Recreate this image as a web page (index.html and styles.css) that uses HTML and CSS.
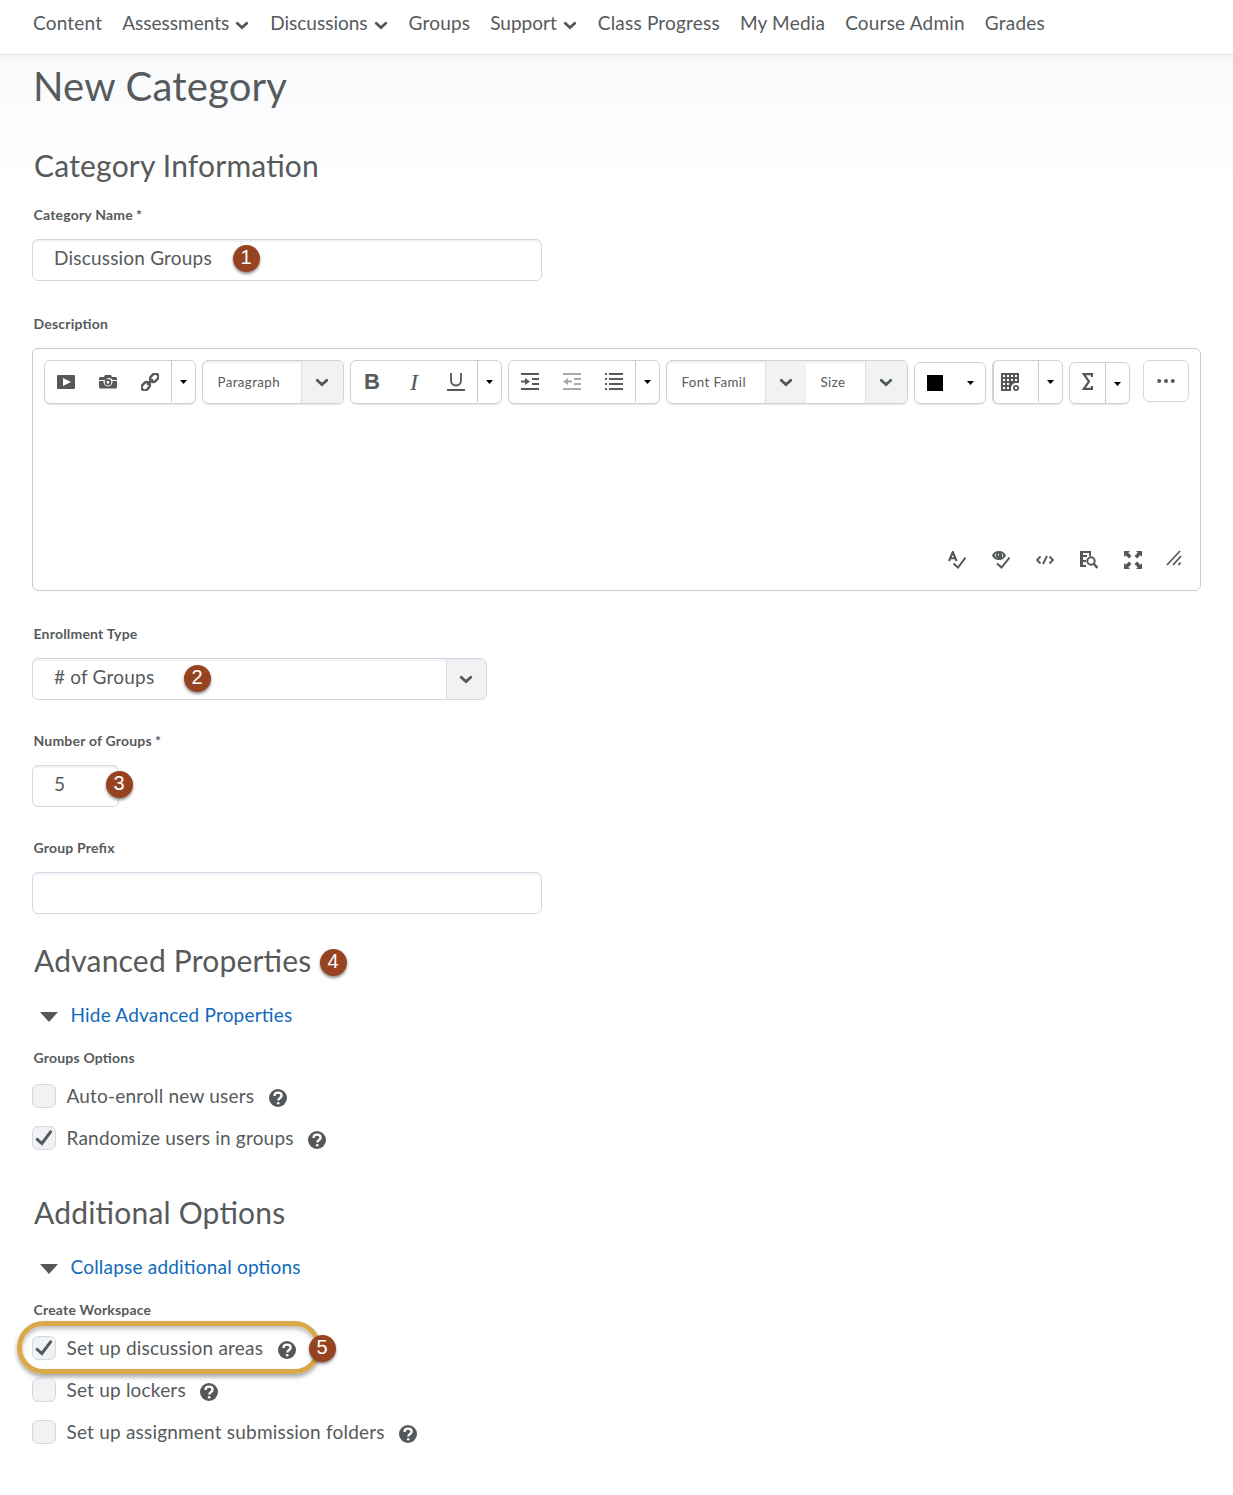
FILE: index.html
```html
<!DOCTYPE html>
<html lang="en">
<head>
    <meta charset="UTF-8">
    <meta name="viewport" content="width=device-width, initial-scale=1.0">
    <title>New Category</title>
    <link rel="stylesheet" href="styles.css">
</head>
<body>
    <!-- Shared icons -->
    <svg class="sprite" width="0" height="0">
        <symbol id="chevron" viewBox="0 0 14 9"><path d="M2.200 2.200L7 6.500l4.800-4.300" fill="none" stroke="#54585a" stroke-width="2.800" stroke-linecap="round"/></symbol>
        <symbol id="caret" viewBox="0 0 7 4"><path d="M0 0h7L3.500 4z"/></symbol>
        <symbol id="help" viewBox="0 0 18 18"><circle cx="9" cy="9" r="9" fill="#54585a"/><path d="M5.500 7C5.500 4.700 7 3.700 9 3.700s3.600 1.200 3.600 3c0 2.400-3.300 2.200-3.300 4.800" fill="none" stroke="#fff" stroke-width="2.300"/><circle cx="9.200" cy="14.300" r="1.300" fill="#fff"/></symbol>
        <symbol id="check" viewBox="0 0 18 18"><path d="M2.200 10.300l4.700 4.200L15.600 2.800" fill="none" stroke="#54585a" stroke-width="3" stroke-linecap="round"/></symbol>
    </svg>

    <nav class="navbar">
        <a>Content</a>
        <a class="has-menu">Assessments <svg class="chevron"><use href="#chevron"/></svg></a>
        <a class="has-menu">Discussions <svg class="chevron"><use href="#chevron"/></svg></a>
        <a>Groups</a>
        <a class="has-menu">Support <svg class="chevron"><use href="#chevron"/></svg></a>
        <a>Class Progress</a>
        <a>My Media</a>
        <a>Course Admin</a>
        <a>Grades</a>
    </nav>

    <main class="page">
        <h1>New Category</h1>
        <h2>Category Information</h2>

        <div class="field field-name">
            <label>Category Name<span class="required">*</span></label>
            <div class="input">Discussion Groups<span class="badge badge-1">1</span></div>
        </div>

        <div class="field">
            <label>Description</label>
            <div class="editor">
                <div class="toolbar">
                    <div class="group">
                        <span class="tool"><svg viewBox="0 0 18 18"><path fill-rule="evenodd" d="M1 2h16a1 1 0 0 1 1 1v12a1 1 0 0 1-1 1H1a1 1 0 0 1-1-1V3a1 1 0 0 1 1-1zM6 5v8l8-4z"/></svg></span>
                        <span class="tool"><svg viewBox="0 0 18 18"><path fill-rule="evenodd" d="M1 4h4l1-2h6l1 2h4l1 1v2h-4.300a4.500 4.500 0 0 0-7.400 0H0V5zM0 8h4.600a4.500 4.500 0 1 0 8.800 0H18v6l-1 1.500H1L0 14zM9 6a3.300 3.300 0 1 1 0 6.600A3.300 3.300 0 0 1 9 6zm0 1.900a1.400 1.400 0 1 0 0 2.800 1.400 1.400 0 0 0 0-2.800z"/></svg></span>
                        <span class="tool"><svg viewBox="0 0 18 18"><g fill="none" stroke="#54585a" stroke-width="2.400" transform="rotate(-45 9 9)"><rect x="-1.500" y="5.800" width="9" height="6.400" rx="3"/><rect x="10.500" y="5.800" width="9" height="6.400" rx="3"/><path d="M5 9h8"/></g></svg></span>
                        <span class="drop"><svg class="caret"><use href="#caret"/></svg></span>
                    </div>
                    <div class="group select-group">
                        <span class="select-text paragraph">Paragraph</span>
                        <span class="select-arrow"><svg class="chevron"><use href="#chevron"/></svg></span>
                    </div>
                    <div class="group">
                        <span class="tool"><b class="bold">B</b></span>
                        <span class="tool"><i class="italic">I</i></span>
                        <span class="tool"><svg viewBox="0 0 18 18"><path d="M4 0v7.500a5 5 0 0 0 10 0V0" fill="none" stroke="#54585a" stroke-width="1.800"/><path d="M0 16h18v2H0z"/></svg></span>
                        <span class="drop"><svg class="caret"><use href="#caret"/></svg></span>
                    </div>
                    <div class="group">
                        <span class="tool"><svg viewBox="0 0 18 18"><path d="M0 0h18v2H0zM0 15h18v2H0zM11 5h7v2h-7zM11 10h7v2h-7zM0 7.600h4V5l5 3.500L4 12V9.400H0z"/></svg></span>
                        <span class="tool disabled"><svg viewBox="0 0 18 18"><path d="M0 0h18v2H0zM0 15h18v2H0zM11 5h7v2h-7zM11 10h7v2h-7zM9 7.600H5V5L0 8.500 5 12V9.400h4z"/></svg></span>
                        <span class="tool"><svg viewBox="0 0 18 18"><path d="M4 0h14v2H4zM4 5h14v2H4zM4 10h14v2H4zM4 15h14v2H4zM0 0h2v2H0zM0 5h2v2H0zM0 10h2v2H0zM0 15h2v2H0z"/></svg></span>
                        <span class="drop"><svg class="caret"><use href="#caret"/></svg></span>
                    </div>
                    <div class="group select-group">
                        <span class="select-text family">Font Famil</span>
                        <span class="select-arrow family-arrow"><svg class="chevron"><use href="#chevron"/></svg></span>
                        <span class="select-text size">Size</span>
                        <span class="select-arrow"><svg class="chevron"><use href="#chevron"/></svg></span>
                    </div>
                    <div class="group short color">
                        <span class="swatch"></span>
                        <svg class="caret"><use href="#caret"/></svg>
                    </div>
                    <div class="group table">
                        <span class="tool"><svg viewBox="0 0 18 18"><path fill-rule="evenodd" d="M0 0h18v10h-3a5 5 0 0 0-5 5v3H0zM2 2v2h2V2zm4 0v2h2V2zm4 0v2h2V2zm4 0v2h2V2zM2 6v2h2V6zm4 0v2h2V6zm4 0v2h2V6zm4 0v2h2V6zM2 10v2h2v-2zm4 0v2h2v-2zM2 14v2h2v-2zm4 0v2h2v-2z"/><circle cx="15" cy="15" r="2.100" fill="none" stroke="#54585a" stroke-width="1.800"/></svg></span>
                        <span class="drop"><svg class="caret"><use href="#caret"/></svg></span>
                    </div>
                    <div class="group short sigma">
                        <span class="tool"><svg viewBox="0 0 18 18"><path d="M13 4V1.200H4.800L10 8.500l-5.200 7.300H13V13" fill="none" stroke="#54585a" stroke-width="2.200"/></svg></span>
                        <span class="drop"><svg class="caret"><use href="#caret"/></svg></span>
                    </div>
                    <div class="more"><svg viewBox="0 0 18 4"><circle cx="2.200" cy="2" r="2"/><circle cx="9" cy="2" r="2"/><circle cx="15.800" cy="2" r="2"/></svg></div>
                </div>
                <div class="editor-footer">
                    <svg viewBox="0 0 18 18"><path d="M1 10L4.800 1 8.600 10M2.500 7.200h4.600" fill="none" stroke="#54585a" stroke-width="2.100"/><path d="M5.500 12.500l4.500 4 7.500-10" fill="none" stroke="#54585a" stroke-width="2"/></svg>
                    <svg viewBox="0 0 18 18"><path fill-rule="evenodd" d="M7 0c3.500 0 6 2 7 4.500C13 7 10.500 9 7 9S1 7 0 4.500C1 2 3.500 0 7 0zM4.500 2Q1 4.500 4.500 7Q3 4.500 4.500 2zM9.500 2Q11 4.500 9.500 7Q13 4.500 9.500 2zM7 2.500A1.300 1.300 0 0 0 7 5z"/><path d="M5 12.500l4.500 4 8-10" fill="none" stroke="#54585a" stroke-width="2"/></svg>
                    <svg viewBox="0 0 18 18"><path d="M4.500 5.500L1 9l3.500 3.500M13.500 5.500L17 9l-3.500 3.500M11 5l-4 8" fill="none" stroke="#54585a" stroke-width="1.900"/></svg>
                    <svg viewBox="0 0 18 18"><path d="M0 0h11v5H9V2H3v2h4v2H3v3h3v2H3v3h3v2H0z"/><circle cx="11" cy="10" r="3.700" fill="none" stroke="#54585a" stroke-width="2"/><path d="M13.500 12.500L17.500 17" stroke="#54585a" stroke-width="2.400"/></svg>
                    <svg viewBox="0 0 18 18"><path d="M0 0h6L4.300 1.700 7.500 4.900 4.900 7.500 1.700 4.300 0 6zM18 0v6l-1.700-1.700-3.200 3.200-2.600-2.600 3.200-3.200L12 0zM0 18v-6l1.700 1.700 3.200-3.200 2.600 2.600-3.200 3.200L6 18zM18 18h-6l1.700-1.700-3.200-3.200 2.600-2.600 3.200 3.200L18 12z"/></svg>
                    <svg class="resize" viewBox="0 0 16 16"><path d="M1 15L14 1M7 15l8-9M12.500 15l2-2.500" fill="none" stroke="#54585a" stroke-width="1.800"/></svg>
                </div>
            </div>
        </div>

        <div class="field">
            <label>Enrollment Type</label>
            <div class="input select"># of Groups<span class="select-arrow"><svg class="chevron"><use href="#chevron"/></svg></span><span class="badge badge-2">2</span></div>
        </div>

        <div class="field">
            <label>Number of Groups<span class="required">*</span></label>
            <div class="input number">5<span class="badge badge-3">3</span></div>
        </div>

        <div class="field field-prefix">
            <label>Group Prefix</label>
            <div class="input"></div>
        </div>

        <!-- Advanced properties -->
        <section>
            <h2><span class="anchor">Advanced Properties<span class="badge badge-4">4</span></span></h2>
            <a class="toggle"><svg viewBox="0 0 18 10"><path d="M0 0h18L9 10z"/></svg>Hide Advanced Properties</a>
            <label>Groups Options</label>
            <div class="option"><span class="checkbox"></span>Auto-enroll new users<svg class="help"><use href="#help"/></svg></div>
            <div class="option"><span class="checkbox"><svg><use href="#check"/></svg></span>Randomize users in groups<svg class="help"><use href="#help"/></svg></div>
        </section>

        <!-- Additional options -->
        <section>
            <h2>Additional Options</h2>
            <a class="toggle"><svg viewBox="0 0 18 10"><path d="M0 0h18L9 10z"/></svg>Collapse additional options</a>
            <label>Create Workspace</label>
            <div class="option"><span class="checkbox"><svg><use href="#check"/></svg></span>Set up discussion areas<svg class="help"><use href="#help"/></svg><span class="highlight"></span><span class="badge badge-5">5</span></div>
            <div class="option"><span class="checkbox"></span>Set up lockers<svg class="help"><use href="#help"/></svg></div>
            <div class="option"><span class="checkbox"></span>Set up assignment submission folders<svg class="help"><use href="#help"/></svg></div>
        </section>
    </main>
</body>
</html>
```

FILE: styles.css
```css
* {
    box-sizing: border-box;
}
body {
    font-family: Lato, sans-serif;
    font-size: 19px;
    line-height: 24px;
    letter-spacing: 0.2px;
    font-feature-settings: "liga" 1;
    margin: 0;
    background-color: #fff;
    color: #565a5c;
}
svg {
    fill: #54585a;
    flex: none;
}
.sprite {
    display: block;
}
.navbar {
    display: flex;
    gap: 20px;
    height: 55px;
    padding: 11px 33px 0;
    border-bottom: 1px solid #e3e7ec;
    white-space: nowrap;
}
.navbar a {
    display: flex;
    height: 24px;
    align-items: center;
}
.navbar .has-menu {
    letter-spacing: 0;
}
.chevron {
    width: 14px;
    height: 9px;
}
.navbar .chevron {
    margin: 4px 1px 0 6px;
}
.page {
    padding: 7px 32px 0;
    border-top: 4px solid #f3f4f6;
    background: linear-gradient(#f9fafc, #fff 130px) no-repeat;
}
h1, h2 {
    margin: 0 0 0 2px;
    font-weight: normal;
}
h1 {
    margin-left: 1px;
    font-size: 40px;
    line-height: 40px;
}
h2 {
    font-size: 30px;
    line-height: 36px;
    padding-top: 41px;
    margin-bottom: 22px;
}
label {
    display: block;
    margin: 0 0 14px 1.5px;
    font-size: 14px;
    font-weight: bold;
    line-height: 20px;
}
.required {
    margin-left: 3px;
}
.field {
    margin-bottom: 31px;
}
.field-name {
    margin-bottom: 33px;
}
.field-prefix {
    margin-bottom: 28px;
}
.input {
    position: relative;
    width: 510px;
    height: 42px;
    padding: 6px 21px;
    border: 1px solid #d3d9e3;
    border-radius: 6px;
    box-shadow: inset 0 2px 0 #f1f2f5;
}
.select {
    width: 455px;
}
.number {
    width: 87px;
}
.select-arrow {
    display: flex;
    align-items: center;
    justify-content: center;
    width: 42px;
    padding-right: 2px;
    background-color: #f1f2f4;
    border-left: 1px solid #dce0e6;
}
.input .select-arrow {
    position: absolute;
    top: 0;
    right: 0;
    width: 40px;
    height: 40px;
    border-radius: 0 5px 5px 0;
    box-shadow: inset 0 2px 0 #e9ebee;
}

/* Numbered markers */
.badge {
    position: absolute;
    width: 27px;
    height: 27px;
    border-radius: 50%;
    background-color: #964321;
    box-shadow: 0 2px 3px rgba(0,0,0,0.45);
    color: #fff;
    font-family: "Liberation Sans", Arial, sans-serif;
    font-size: 20px;
    line-height: 25px;
    letter-spacing: 0;
    text-align: center;
}
.badge-1 {
    left: 199.5px;
    top: 5px;
}
.badge-2 {
    left: 150.5px;
    top: 6px;
}
.badge-3 {
    left: 72.5px;
    top: 5px;
}
.badge-4 {
    left: 285.5px;
    top: 7px;
}
.badge-5 {
    left: 276.5px;
    top: -1px;
}
.anchor {
    position: relative;
}

/* Editor */
.editor {
    display: flex;
    flex-direction: column;
    justify-content: space-between;
    height: 243px;
    margin-bottom: 33px;
    padding: 11px;
    border: 1px solid #c9cbce;
    border-radius: 6px;
}
.toolbar {
    display: flex;
    align-items: flex-end;
    gap: 6px;
    height: 44px;
}
.group {
    display: flex;
    height: 44px;
    border: 1px solid #d0d1d3;
    border-radius: 6px;
    box-shadow: 0 1px 1px #e8e8e8;
    overflow: hidden;
}
.tool {
    display: flex;
    align-items: center;
    justify-content: center;
    width: 42px;
}
.tool svg {
    width: 18px;
    height: 18px;
}
.disabled {
    opacity: 0.5;
}
.drop {
    display: flex;
    align-items: center;
    justify-content: center;
    width: 24px;
    height: 41px;
    border-left: 1px solid #c9cbce;
}
.caret {
    width: 7px;
    height: 4px;
    fill: #000;
}
.bold {
    font: bold 22px "Liberation Sans", Arial, sans-serif;
}
.italic {
    font: italic 24px "Liberation Serif", serif;
}
.select-group {
    font-size: 13.3px;
    letter-spacing: 0.4px;
    box-shadow: inset 0 2px 0 #eef0f3, 0 1px 1px #e8e8e8;
}
.select-text {
    display: flex;
    align-items: center;
    padding-left: 14.5px;
    white-space: nowrap;
}
.paragraph {
    width: 98px;
}
.family {
    width: 98px;
}
.family-arrow {
    width: 41px;
    padding-right: 0;
}
.size {
    width: 59px;
}
.short {
    height: 42px;
}
.color {
    width: 72px;
    align-items: center;
    justify-content: space-between;
    padding: 0 11px 0 12px;
}
.swatch {
    width: 16px;
    height: 16px;
    background-color: #000;
}
.table {
    width: 71px;
    border-left-width: 2px;
}
.table .tool {
    width: 32px;
    margin-right: 12px;
}
.sigma .tool {
    width: 35px;
    padding-bottom: 2px;
}
.sigma {
    width: 61px;
}
.more {
    display: flex;
    align-items: center;
    justify-content: center;
    width: 46px;
    height: 42px;
    margin: 0 0 2px 7px;
    border: 1px solid #d3d9e3;
    border-radius: 6px;
}
.more svg {
    width: 18px;
    height: 4px;
}
.editor-footer {
    display: flex;
    justify-content: flex-end;
    gap: 26px;
    padding: 0 7px 10px 0;
}
.editor-footer svg {
    width: 18px;
    height: 18px;
}
.editor-footer .resize {
    width: 16px;
    height: 16px;
    margin: -1px 0 0 -2px;
}

/* Option lists */
section h2 {
    padding-top: 0;
    margin-bottom: 25px;
}
section {
    margin-bottom: 44px;
}
section label {
    margin-bottom: 16px;
}
.toggle {
    display: flex;
    align-items: center;
    gap: 12.5px;
    height: 24px;
    margin: 0 0 21px 8px;
    color: #0f6abb;
}
.toggle svg {
    width: 18px;
    height: 10px;
    margin-top: 3px;
}
.option {
    display: flex;
    align-items: center;
    position: relative;
    height: 24px;
    margin-bottom: 18px;
}
.checkbox {
    display: flex;
    align-items: center;
    justify-content: center;
    width: 24px;
    height: 24px;
    margin-right: 10.5px;
    border: 1px solid #d3d9e3;
    border-radius: 6px;
    background-color: #f1f2f4;
}
.checkbox svg {
    width: 18px;
    height: 18px;
}
.help {
    width: 18px;
    height: 18px;
    margin: 4px 0 0 14.5px;
}
.highlight {
    position: absolute;
    left: -15px;
    top: -15px;
    width: 304px;
    height: 53px;
    border: 5px solid #d9a949;
    border-radius: 27px;
    box-shadow: 0 3px 4px rgba(0,0,0,0.35), inset 0 3px 4px rgba(0,0,0,0.25);
}
```
